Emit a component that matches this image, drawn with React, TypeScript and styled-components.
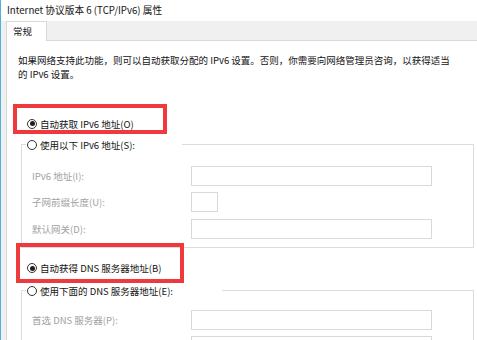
import React from "react";
import styled, { createGlobalStyle } from "styled-components";

const Global = createGlobalStyle`
  html, body { margin: 0; padding: 0; background: #ffffff; }
  body { font-family: "Noto Sans CJK SC", "Noto Sans", sans-serif; }
  * { box-sizing: border-box; }
`;

const Window = styled.div`
  width: 477px;
  height: 340px;
  overflow: hidden;
  background: #f0f0f0;
  border-left: 1px solid #4fb3d9;
  display: flex;
  flex-direction: column;
  font-size: 9.5px;
  color: #141414;
`;

const TitleBar = styled.div`
  height: 21px;
  line-height: 21px;
  background: #ffffff;
  padding-left: 6px;
  font-size: 9.7px;
  white-space: nowrap;
`;

const TabStrip = styled.div`
  height: 27px;
  display: flex;
  align-items: flex-end;
  padding-left: 5px;
`;

const Tab = styled.div`
  position: relative;
  z-index: 1;
  width: 41px;
  height: 20px;
  margin-bottom: -1px;
  padding-left: 6px;
  line-height: 18px;
  background: #ffffff;
  border: 1px solid #d9d9d9;
  border-bottom: none;
`;

const Panel = styled.div`
  flex: 1;
  margin-left: 5px;
  background: #ffffff;
  border-left: 1px solid #d9d9d9;
  border-top: 1px solid #d9d9d9;
  display: flex;
  flex-direction: column;
  align-items: flex-start;
`;

const Description = styled.p`
  margin: 12px 0 0 11px;
  line-height: 14px;
  white-space: nowrap;
`;

const OptionRow = styled.div<{ $mt: number }>`
  position: relative;
  display: flex;
  align-items: center;
  gap: 3px;
  height: 15px;
  margin: ${(p) => p.$mt}px 0 0 20px;
  white-space: nowrap;
`;

const Radio = styled.span<{ $checked?: boolean }>`
  width: 10px;
  height: 10px;
  flex: none;
  border-radius: 50%;
  border: 1px solid #333333;
  background: #ffffff;
  display: grid;
  place-items: center;
  &::after {
    content: "";
    width: 5px;
    height: 5px;
    border-radius: 50%;
    background: ${(p) => (p.$checked ? "#1f1f1f" : "transparent")};
  }
`;

const Highlight = styled.div<{ $top: number; $left: number; $w: number; $h: number }>`
  position: absolute;
  z-index: 2;
  top: ${(p) => p.$top}px;
  left: ${(p) => p.$left}px;
  width: ${(p) => p.$w}px;
  height: ${(p) => p.$h}px;
  border: 4.5px solid #ee3a3d;
  pointer-events: none;
`;

const Group = styled.fieldset<{ $mt: number }>`
  margin: ${(p) => p.$mt}px 0 0 14px;
  padding: 0;
  width: 453px;
  min-width: 0;
  border: 1px solid #dcdcdc;
`;

const GroupLegend = styled.legend<{ $w: number }>`
  margin-left: 4px;
  padding: 0 0 0 1px;
  width: ${(p) => p.$w}px;
  height: 15px;
  display: flex;
  align-items: center;
  gap: 3px;
  background: #ffffff;
  white-space: nowrap;
`;

const Rows = styled.div<{ $pt: number }>`
  display: grid;
  grid-template-columns: 159px auto;
  row-gap: 6.67px;
  align-items: center;
  padding: ${(p) => p.$pt}px 0 8px 10px;
`;

const FieldLabel = styled.span`
  color: #a2a2a2;
  line-height: 20px;
  white-space: nowrap;
`;

const TextBox = styled.input<{ $w: number }>`
  width: ${(p) => p.$w}px;
  height: 20px;
  margin: 0;
  padding: 0;
  border: 1px solid #d9d9d9;
  background: #ffffff;
  outline: none;
`;

export default function App() {
  return (
    <>
      <Global />
      <Window>
        <TitleBar>Internet 协议版本 6 (TCP/IPv6) 属性</TitleBar>
        <TabStrip>
          <Tab>常规</Tab>
        </TabStrip>
        <Panel>
          <Description>
            如果网络支持此功能，则可以自动获取分配的 IPv6 设置。否则，你需要向网络管理员咨询，以获得适当
            <br />
            的 IPv6 设置。
          </Description>

          <OptionRow $mt={35}>
            <Highlight $top={-12} $left={-14} $w={154} $h={30} />
            <Radio $checked />
            <span>自动获取 IPv6 地址(O)</span>
          </OptionRow>

          <Group $mt={6}>
            <GroupLegend $w={156}>
              <Radio />
              <span>使用以下 IPv6 地址(S):</span>
            </GroupLegend>
            <Rows $pt={13.5}>
              <FieldLabel>IPv6 地址(I):</FieldLabel>
              <TextBox $w={241} disabled />
              <FieldLabel>子网前缀长度(U):</FieldLabel>
              <TextBox $w={27} disabled />
              <FieldLabel>默认网关(D):</FieldLabel>
              <TextBox $w={241} disabled />
            </Rows>
          </Group>

          <OptionRow $mt={13}>
            <Highlight $top={-18.3} $left={-11} $w={168} $h={40} />
            <Radio $checked />
            <span>自动获得 DNS 服务器地址(B)</span>
          </OptionRow>

          <Group $mt={7.5}>
            <GroupLegend $w={196}>
              <Radio />
              <span>使用下面的 DNS 服务器地址(E):</span>
            </GroupLegend>
            <Rows $pt={11.5}>
              <FieldLabel>首选 DNS 服务器(P):</FieldLabel>
              <TextBox $w={241} disabled />
              <FieldLabel>备用 DNS 服务器(A):</FieldLabel>
              <TextBox $w={241} disabled />
            </Rows>
          </Group>
        </Panel>
      </Window>
    </>
  );
}
